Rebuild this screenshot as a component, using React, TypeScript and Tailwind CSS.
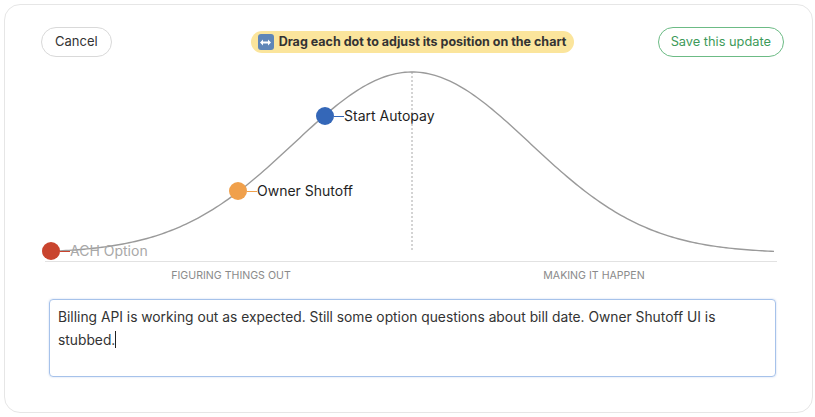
const CX = 367
const PEAK = 10
const BASE = 191
const SIGMA = 118

function curveY(x: number) {
  return BASE - (BASE - PEAK) * Math.exp(-((x - CX) ** 2) / (2 * SIGMA * SIGMA))
}

function bellPath() {
  const pts: string[] = []
  for (let x = 6; x <= 730; x += 3) {
    pts.push(`${x === 6 ? 'M' : 'L'}${x},${curveY(x).toFixed(2)}`)
  }
  return pts.join(' ')
}

const dots = [
  { label: 'ACH Option', x: 6, y: 189, dot: 'bg-[#c9442e]', line: 'bg-[#c9442e]', text: 'text-[#a8a8a8]' },
  { label: 'Owner Shutoff', x: 193, y: 129, dot: 'bg-[#f0a04b]', line: 'bg-[#f0a04b]', text: 'text-[#1f1f1f]' },
  { label: 'Start Autopay', x: 280, y: 54, dot: 'bg-[#3467b8]', line: 'bg-[#3467b8]', text: 'text-[#1f1f1f]' },
]

export default function App() {
  return (
    <div className="p-[4px] bg-white font-['Inter',sans-serif]">
      <div className="w-[809px] h-[409px] rounded-2xl border border-[#e6e6e6] bg-white">
        {/* Header */}
        <div className="grid grid-cols-[1fr_auto_1fr] items-center pl-9 pr-7 pt-[22px]">
          <div>
            <button className="h-[30px] px-[13px] rounded-full border border-[#d9d9d9] text-[13px] text-[#333]">
              Cancel
            </button>
          </div>
          <div className="flex items-center gap-[5px] h-[22px] pl-[7px] pr-[8px] rounded-full bg-[#fbe59c] text-[12.5px] font-bold text-[#333]">
            <span className="w-[16px] h-[16px] rounded-[3px] bg-[#5f86b8] flex items-center justify-center">
              <svg width="11" height="7" viewBox="0 0 11 7" fill="white">
                <polygon points="0,3.5 3,0.5 3,2.5 8,2.5 8,0.5 11,3.5 8,6.5 8,4.5 3,4.5 3,6.5" />
              </svg>
            </span>
            Drag each dot to adjust its position on the chart
          </div>
          <div className="flex justify-end">
            <button className="h-[30px] px-[12px] rounded-full border border-[#6cbb85] text-[12.8px] text-[#3d9a5a]">
              Save this update
            </button>
          </div>
        </div>

        {/* Chart */}
        <div className="ml-[40px] w-[732px] mt-[5px]">
          <div className="relative h-[200px] border-b border-[#e2e2e2]">
            <svg className="absolute inset-0" width="732" height="199" viewBox="0 0 732 199">
              <line x1={CX} y1={PEAK} x2={CX} y2={189} stroke="#a8a8a8" strokeWidth="1" strokeDasharray="2 2" />
              <path d={bellPath()} fill="none" stroke="#9a9a9a" strokeWidth="1.4" />
            </svg>
            {dots.map((d) => (
              <div
                key={d.label}
                className="absolute flex items-center"
                style={{ left: d.x - 9, top: d.y - 9 }}
              >
                <span className={`w-[18px] h-[18px] rounded-full ${d.dot}`} />
                <span className={`w-[10px] h-px ${d.line}`} />
                <span className={`text-[14px] leading-[18px] ${d.text}`}>{d.label}</span>
              </div>
            ))}
          </div>
          <div className="grid grid-cols-2 pt-[7px] text-[10.6px] leading-[13px] text-[#8a8a8a] text-center">
            <div className="pl-[6px]">FIGURING THINGS OUT</div>
            <div>MAKING IT HAPPEN</div>
          </div>
        </div>

        {/* Notes */}
        <div className="ml-[44px] w-[727px] mt-[17px] h-[78px] rounded-[4px] border border-[#a6c2ea] shadow-[0_0_2px_rgba(80,130,210,0.35)] px-[8px] py-[6px] text-[13.8px] leading-[23px] text-[#333]">
          Billing API is working out as expected. Still some option questions about bill date. Owner Shutoff UI is stubbed.
          <span className="inline-block w-px h-[17px] bg-[#222] align-[-3px]" />
        </div>
      </div>
    </div>
  )
}
